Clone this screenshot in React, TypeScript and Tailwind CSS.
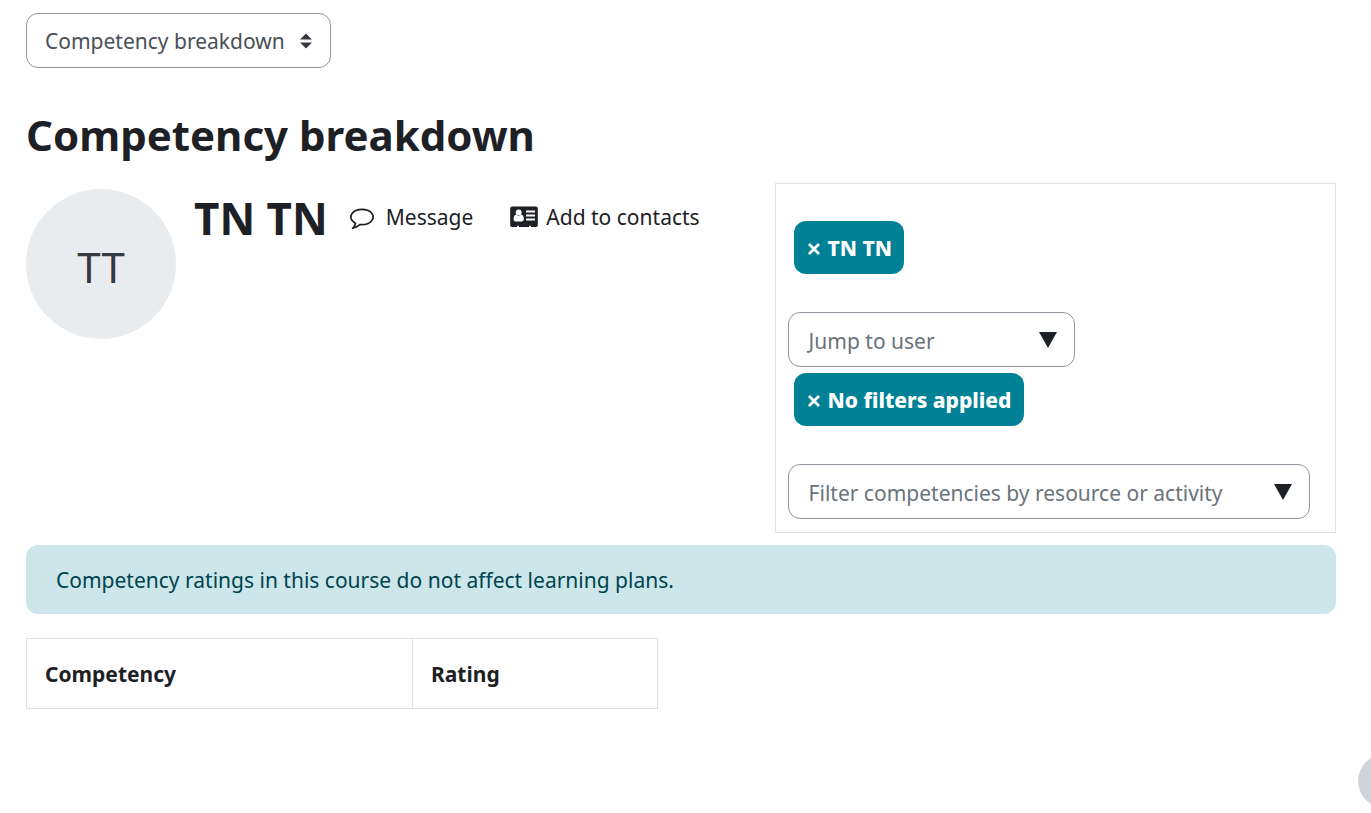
import { useState } from 'react';

export default function App() {
  return (
    <div className="pt-[13px] pb-6 pl-[26px] pr-[35px] font-['Noto_Sans','Liberation_Sans',sans-serif] text-[21px] leading-[34px] text-[#1d2125]">
      <nav>
        <ReportSelect />
      </nav>

      <main>
        <h1 className="mt-10 text-[42px] leading-[54px] font-bold">Competency breakdown</h1>

        <div className="mt-[21px] flex items-start justify-between">
          <UserHeader />
          <FilterPanel />
        </div>

        <div className="mt-3 rounded-xl bg-[#cce6ea] px-[30px] pt-[18px] pb-[17px] text-[#00434e]">
          Competency ratings in this course do not affect learning plans.
        </div>

        <CompetencyTable />
      </main>

      <button
        type="button"
        aria-label="Show footer"
        className="fixed -right-[41px] bottom-[5px] size-[54px] rounded-full bg-[#ced4da]"
      />
    </div>
  );
}

function ReportSelect() {
  return (
    <div className="relative inline-block align-top">
      <select
        aria-label="Report"
        className="h-[55px] w-[305px] appearance-none rounded-xl border border-[#8f959e] bg-white pl-[18px] pr-10 text-[#495057]"
      >
        <option>Competency breakdown</option>
      </select>
      <svg
        viewBox="0 0 12 16"
        className="pointer-events-none absolute top-5 right-[19px] h-4 w-3 fill-[#343a40]"
        aria-hidden="true"
      >
        <path d="M0 6.600 6 .6l6 6zM0 9.400l6 6 6-6z" />
      </svg>
    </div>
  );
}

function UserHeader() {
  return (
    <div className="mt-1.5 flex items-start">
      <div className="flex size-[150px] items-center justify-center rounded-full bg-[#e9ecef] pt-1.5 text-[42px] text-[#343a40]">
        TT
      </div>
      <h2 className="ml-[18px] text-[44px] leading-[58px] font-bold">TN TN</h2>
      <div className="ml-[22px] flex gap-[37px] pt-[11px]">
        <a href="#message" className="flex items-center gap-3">
          <CommentIcon />
          Message
        </a>
        <a href="#contacts" className="flex items-center gap-2">
          <AddressCardIcon />
          Add to contacts
        </a>
      </div>
    </div>
  );
}

function FilterPanel() {
  return (
    <div className="w-3/7 border border-[#dee2e6] px-3 pt-[37px] pb-[13px]">
      <Chip label="TN TN" />
      <div className="mt-[38px] w-[287px]">
        <Autocomplete placeholder="Jump to user" />
      </div>
      <div className="mt-1.5">
        <Chip label="No filters applied" />
      </div>
      <div className="mt-[38px] w-[522px] max-w-full">
        <Autocomplete placeholder="Filter competencies by resource or activity" />
      </div>
    </div>
  );
}

function Chip({ label }: { label: string }) {
  return (
    <button
      type="button"
      className="ml-1.5 flex h-[53px] items-center gap-2 rounded-xl bg-[#008196] pl-3.5 pr-3 font-extrabold text-white"
    >
      <svg viewBox="0 0 12 12" className="mt-0.5 size-3 stroke-white stroke-[2.8]" aria-hidden="true">
        <path d="M1 1l10 10M11 1 1 11" />
      </svg>
      {label}
    </button>
  );
}

function Autocomplete({ placeholder }: { placeholder: string }) {
  const [value, setValue] = useState('');

  return (
    <div className="flex h-[55px] items-center rounded-xl border border-[#8f959e] pl-3 pr-[17px]">
      <input
        type="text"
        aria-label={placeholder}
        placeholder={placeholder}
        value={value}
        onChange={(e) => setValue(e.target.value)}
        className="min-w-0 flex-1 pt-0.5 indent-2 outline-none placeholder:text-[#6a737b]"
      />
      <button type="button" aria-label="Show suggestions">
        <svg viewBox="0 0 18 16" className="h-4 w-[18px] fill-[#1d2125]" aria-hidden="true">
          <path d="M0 0h18L9 16z" />
        </svg>
      </button>
    </div>
  );
}

function CompetencyTable() {
  return (
    <table className="mt-6 border-collapse text-left">
      <thead>
        <tr>
          <th className="h-[70px] w-[386px] border border-[#dee2e6] px-[18px]">Competency</th>
          <th className="w-[245px] border border-[#dee2e6] px-[18px]">Rating</th>
        </tr>
      </thead>
    </table>
  );
}

function CommentIcon() {
  return (
    <svg viewBox="0 0 1792 1792" className="size-6 fill-current" aria-hidden="true">
      <path d="M896 384q-204 0-381.5 69.5t-282 187.5-104.5 255q0 112 71.5 213.5t201.5 175.5l87 50-27 96q-24 91-70 172 152-63 275-171l43-38 57 6q69 8 130 8 204 0 381.5-69.5t282-187.5 104.5-255-104.5-255-282-187.5-381.5-69.5zm896 512q0 174-120 321.5t-326 233-450 85.5q-70 0-145-8-198 175-460 242-49 14-114 22h-5q-15 0-27-10.5t-16-27.5v-1q-3-4-.5-12t2-10 4.5-9.5l6-9 7-8.5 8-9q7-8 31-34.5t34.5-38 31-39.5 32.5-51 27-59 26-76q-157-89-247.5-220t-90.5-281q0-174 120-321.5t326-233 450-85.5 450 85.5 326 233 120 321.5z" />
    </svg>
  );
}

function AddressCardIcon() {
  return (
    <svg viewBox="0 0 28 22" className="h-[22px] w-7" aria-hidden="true">
      <path
        className="fill-current"
        d="M2 .5h24a1.800 1.800 0 0 1 1.800 1.800v17a1.800 1.800 0 0 1-1.800 1.800h-5.200v-1.400h-1.700v1.400H8.900v-1.400H7.200v1.400H2a1.800 1.800 0 0 1-1.800-1.800v-17A1.800 1.800 0 0 1 2 .5z"
      />
      <g className="fill-white">
        <circle cx="8.700" cy="6.400" r="2.900" />
        <path d="M6.200 8.600c-1.800.3-2.600 1.900-2.600 4.500 0 1.600.8 2.400 2 2.400h6.200c1.200 0 2-.8 2-2.400 0-2.600-.8-4.200-2.600-4.500-1.500 1.400-3.500 1.400-5 0z" />
        <path d="M16 4.500h9v2h-9zM16 8.500h9v2h-9zM16 12.500h9v2h-9z" />
      </g>
    </svg>
  );
}
